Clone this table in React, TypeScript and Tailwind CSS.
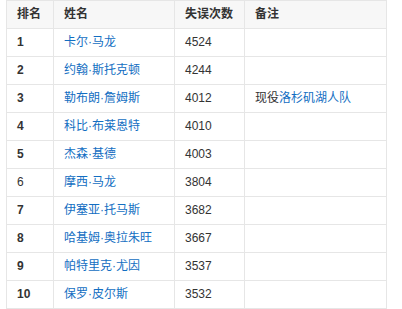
import React from 'react';

type Row = { rank: string; name: string; count: string; note?: React.ReactNode; bold?: boolean };

const rows: Row[] = [
    { rank: '1', name: '卡尔·马龙', count: '4524', bold: true },
    { rank: '2', name: '约翰·斯托克顿', count: '4244', bold: true },
    { rank: '3', name: '勒布朗·詹姆斯', count: '4012', bold: true, note: <>现役<a className="text-[#136ec2]">洛杉矶湖人队</a></> },
    { rank: '4', name: '科比·布莱恩特', count: '4010', bold: true },
    { rank: '5', name: '杰森·基德', count: '4003', bold: true },
    { rank: '6', name: '摩西·马龙', count: '3804' },
    { rank: '7', name: '伊塞亚·托马斯', count: '3682', bold: true },
    { rank: '8', name: '哈基姆·奥拉朱旺', count: '3667', bold: true },
    { rank: '9', name: '帕特里克·尤因', count: '3537', bold: true },
    { rank: '10', name: '保罗·皮尔斯', count: '3532', bold: true },
    { rank: '', name: '', count: '' },
];

const cell = 'border border-[#e6e6e6] px-[10px] h-[28px] p-0 align-middle text-left';

export default function App() {
    return (
        <div className="w-[402px] h-[309px] bg-white overflow-hidden pl-[6px]" style={{ fontFamily: '"Liberation Sans", Arial, "Noto Sans CJK SC", sans-serif' }}>
            <table className="table-fixed border-collapse w-[380px] text-[12px] leading-[17px] text-[#333]">
                <colgroup>
                    <col className="w-[47px]" />
                    <col className="w-[121px]" />
                    <col className="w-[70px]" />
                    <col className="w-[142px]" />
                </colgroup>
                <thead>
                    <tr className="bg-[#f7f7f7]">
                        <th className={`${cell} font-bold`}>排名</th>
                        <th className={`${cell} font-bold`}>姓名</th>
                        <th className={`${cell} font-bold`}>失误次数</th>
                        <th className={`${cell} font-bold`}>备注</th>
                    </tr>
                </thead>
                <tbody>
                    {rows.map((r, i) => (
                        <tr key={i}>
                            <td className={`${cell} ${r.bold ? 'font-bold' : ''}`}>{r.rank}</td>
                            <td className={cell}><a className="text-[#136ec2]">{r.name}</a></td>
                            <td className={cell}>{r.count}</td>
                            <td className={cell}>{r.note}</td>
                        </tr>
                    ))}
                </tbody>
            </table>
        </div>
    );
}
